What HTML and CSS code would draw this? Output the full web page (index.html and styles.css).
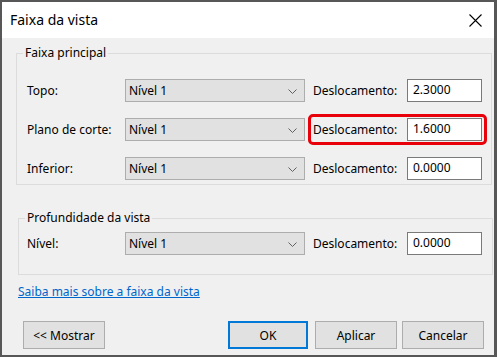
FILE: index.html
```html
<!DOCTYPE html>
<html lang="pt">
<head>
    <meta charset="UTF-8">
    <meta name="viewport" content="width=device-width, initial-scale=1.0">
    <title>Faixa da vista</title>
    <link rel="stylesheet" href="styles.css">
</head>
<body>
    <div class="window">
        <header class="title-bar">
            <span class="title">Faixa da vista</span>
            <svg class="close" width="13" height="13" viewBox="0 0 13 13">
                <path d="M0.5 0.5 L12.5 12.5 M12.5 0.5 L0.5 12.5" stroke="#000" stroke-width="1.1" fill="none"/>
            </svg>
        </header>

        <div class="content">
            <!-- Faixa principal -->
            <fieldset class="group group-main">
                <legend>Faixa principal</legend>
                <div class="row">
                    <span class="label">Topo:</span>
                    <div class="select"><span>Nível 1</span><svg class="chevron" width="9" height="5" viewBox="0 0 9 5"><path d="M0.5 0.5 L4.5 4.5 L8.5 0.5" stroke="#606060" fill="none"/></svg></div>
                    <div class="offset">
                        <span class="offset-label">Deslocamento:</span>
                        <div class="input">2.3000</div>
                    </div>
                </div>
                <div class="row">
                    <span class="label">Plano de corte:</span>
                    <div class="select"><span>Nível 1</span><svg class="chevron" width="9" height="5" viewBox="0 0 9 5"><path d="M0.5 0.5 L4.5 4.5 L8.5 0.5" stroke="#606060" fill="none"/></svg></div>
                    <div class="offset highlight">
                        <span class="offset-label">Deslocamento:</span>
                        <div class="input">1.6000</div>
                    </div>
                </div>
                <div class="row">
                    <span class="label">Inferior:</span>
                    <div class="select"><span>Nível 1</span><svg class="chevron" width="9" height="5" viewBox="0 0 9 5"><path d="M0.5 0.5 L4.5 4.5 L8.5 0.5" stroke="#606060" fill="none"/></svg></div>
                    <div class="offset">
                        <span class="offset-label">Deslocamento:</span>
                        <div class="input">0.0000</div>
                    </div>
                </div>
            </fieldset>

            <!-- Profundidade da vista -->
            <fieldset class="group group-depth">
                <legend>Profundidade da vista</legend>
                <div class="row">
                    <span class="label">Nível:</span>
                    <div class="select"><span>Nível 1</span><svg class="chevron" width="9" height="5" viewBox="0 0 9 5"><path d="M0.5 0.5 L4.5 4.5 L8.5 0.5" stroke="#606060" fill="none"/></svg></div>
                    <div class="offset">
                        <span class="offset-label">Deslocamento:</span>
                        <div class="input">0.0000</div>
                    </div>
                </div>
            </fieldset>

            <a class="help-link" href="#">Saiba mais sobre a faixa da vista</a>

            <div class="buttons">
                <button class="btn btn-show">&lt;&lt; Mostrar</button>
                <button class="btn btn-ok">OK</button>
                <button class="btn btn-apply">Aplicar</button>
                <button class="btn btn-cancel">Cancelar</button>
            </div>
        </div>
    </div>
</body>
</html>
```

FILE: styles.css
```css
* {
    box-sizing: border-box;
    margin: 0;
    padding: 0;
}

body {
    font-family: "Noto Sans", "Open Sans", sans-serif;
    font-size: 12px;
    line-height: 16px;
    color: #000;
    background-color: #f0f0f0;
}

.window {
    width: 497px;
    height: 357px;
    border-style: solid;
    border-color: #575757;
    border-width: 2px 3px 2px 2px;
    background-color: #f0f0f0;
    display: flex;
    flex-direction: column;
}

/* barra de titulo */
.title-bar {
    height: 36px;
    background-color: #fff;
    display: flex;
    align-items: center;
    justify-content: space-between;
    padding: 0 12px 0 8px;
}

.title {
    font-size: 14px;
    line-height: 18px;
    padding-bottom: 1px;
}

.close {
    display: block;
    margin-top: 1px;
}

.content {
    display: flex;
    flex-direction: column;
    padding: 7px 0 0 0;
}

/* grupos */
.group {
    border: 1px solid #dcdcdc;
    margin-left: 14px;
    width: 476px;
}

.group legend {
    padding: 0 2px;
    line-height: 16px;
}

.group-main {
    padding: 18px 0 4px 10px;
}

.group-main legend {
    margin-left: -4px;
}

.group-depth {
    margin-top: 25px;
    margin-left: 16px;
    width: 475px;
    padding: 6px 0 19px 8px;
}

.group-depth legend {
    margin-left: -2px;
}

.row {
    display: flex;
    align-items: center;
    height: 23px;
}

.row + .row {
    margin-top: 16px;
}

.label {
    width: 98px;
    flex-shrink: 0;
}

.select {
    width: 180px;
    height: 23px;
    background-color: #e1e1e1;
    border: 1px solid #adadad;
    display: flex;
    align-items: center;
    justify-content: space-between;
    padding: 0 7px 0 3px;
}

.chevron {
    display: block;
    margin-top: 1px;
}

.offset {
    display: flex;
    align-items: center;
    margin-left: 8px;
}

.offset-label {
    width: 94px;
}

.input {
    width: 75px;
    height: 23px;
    background-color: #fff;
    border: 1px solid #7a7a7a;
    padding: 2px 0 0 5px;
}

/* destaque vermelho */
.highlight {
    border: 3px solid #e8000b;
    border-radius: 5px;
    padding: 1px 2px;
    margin: -4px -5px -4px 3px;
}

.help-link {
    margin: 9px 0 0 16px;
    color: #0066cc;
    text-decoration: underline;
    align-self: flex-start;
}

/* botoes */
.buttons {
    display: flex;
    margin-top: 21px;
    padding-left: 21px;
}

.btn {
    font-family: inherit;
    font-size: 12px;
    height: 28px;
    width: 82px;
    background-color: #e1e1e1;
    border: 1px solid #adadad;
    color: #000;
}

.btn-ok {
    width: 80px;
    margin-left: 123px;
    border: 2px solid #0078d7;
}

.btn-apply {
    margin-left: 7px;
}

.btn-cancel {
    margin-left: 5px;
}
```
